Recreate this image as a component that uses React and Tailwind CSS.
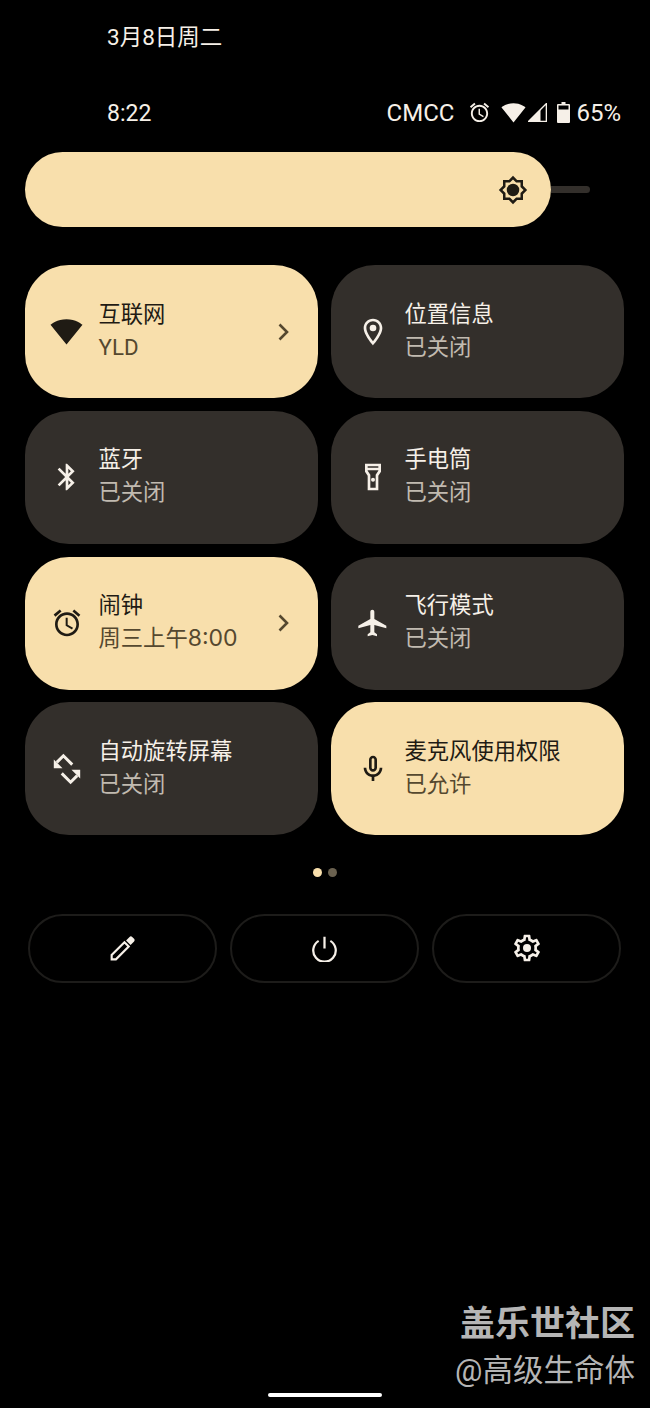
import React from 'react';

const FONT = "font-['Roboto','Noto_Sans_CJK_SC',sans-serif]";

// material style icon paths, 24x24 box
const ICONS = {
    wifi: <path d="M12.01 21.49L23.64 7c-.45-.34-4.93-4-11.64-4C5.28 3 .81 6.66.36 7l11.63 14.49.01.01.01-.01z" />,
    place: <><path d="M12 2C8.13 2 5 5.13 5 9c0 5.25 7 13 7 13s7-7.75 7-13c0-3.87-3.13-7-7-7zM7 9c0-2.76 2.24-5 5-5s5 2.24 5 5c0 2.88-2.88 7.19-5 9.88C9.92 16.21 7 11.85 7 9z" /><circle cx="12" cy="9" r="2.5" /></>,
    bluetooth: <path d="M17.71 7.71L12 2h-1v7.59L6.41 5 5 6.41 10.59 12 5 17.59 6.41 19 11 14.41V22h1l5.71-5.71-4.3-4.29 4.3-4.29zM13 5.83l1.88 1.88L13 9.59V5.83zm1.88 10.46L13 18.17v-3.76l1.88 1.88z" />,
    flashlight: <><path d="M18 2H6v6l2 3v11h8V11l2-3V2zm-2 2v1H8V4h8zm-2 6.4V20h-4v-9.6L8 7.4V7h8v.4l-2 3z" /><circle cx="12" cy="14" r="1.5" /></>,
    alarm: <path d="M22 5.72l-4.6-3.86-1.29 1.53 4.6 3.86L22 5.72zM7.88 3.39L6.6 1.86 2 5.71l1.29 1.53 4.59-3.85zM12.5 8H11v6l4.75 2.85.75-1.23-4-2.37V8zM12 4c-4.97 0-9 4.03-9 9s4.02 9 9 9c4.97 0 9-4.03 9-9s-4.03-9-9-9zm0 16c-3.87 0-7-3.13-7-7s3.13-7 7-7 7 3.13 7 7-3.13 7-7 7z" />,
    plane: <path d="M22 16v-2l-9-5V3.5c0-.83-.67-1.5-1.5-1.5S10 2.67 10 3.5V9l-9 5v2l9-2.5V19l-2 1.5V22l3.5-1 3.5 1v-1.5L13 19v-5.5l9 2.5z" />,
    rotate: <>
        <path d="M5.2 7.6L9.600 3.200L15.500 9.100M18.800 16.400L14.400 20.800L8.500 14.900" fill="none" stroke="currentColor" strokeWidth="2" />
        <path d="M3.200 11.500V5.600L9 11.500zM20.800 12.500V18.400L15 12.500z" />
    </>,
    mic: <><path d="M12 14c1.66 0 3-1.34 3-3V5c0-1.66-1.34-3-3-3S9 3.34 9 5v6c0 1.66 1.34 3 3 3zm-1-9c0-.55.45-1 1-1s1 .45 1 1v6c0 .55-.45 1-1 1s-1-.45-1-1V5z" /><path d="M17 11c0 2.76-2.24 5-5 5s-5-2.24-5-5H5c0 3.53 2.61 6.43 6 6.92V21h2v-3.08c3.39-.49 6-3.39 6-6.92h-2z" /></>,
    edit: <>
        <path d="M3.500 17.300V20.500H6.700L16.300 10.900L13.100 7.700z" fill="none" stroke="currentColor" strokeWidth="1.600" />
        <path d="M14.300 6.300L17.700 9.700L20.300 7.100C20.900 6.500 20.900 5.700 20.300 5.100L18.900 3.700C18.300 3.100 17.500 3.100 16.900 3.700z" />
    </>,
    power: <path d="M12 1.500V12M6.800 5.200A10 10 0 1 0 17.200 5.200" fill="none" stroke="currentColor" strokeWidth="2" />,
    gear: <><path d="M19.43 12.98c.04-.32.07-.64.07-.98 0-.34-.03-.66-.07-.98l2.11-1.65c.19-.15.24-.42.12-.64l-2-3.46c-.09-.16-.26-.25-.44-.25-.06 0-.12.01-.17.03l-2.49 1c-.52-.4-1.08-.73-1.69-.98l-.38-2.65C14.46 2.18 14.25 2 14 2h-4c-.25 0-.46.18-.49.42l-.38 2.65c-.61.25-1.17.59-1.69.98l-2.49-1c-.06-.02-.12-.03-.18-.03-.17 0-.34.09-.43.25l-2 3.46c-.13.22-.07.49.12.64l2.11 1.65c-.04.32-.07.65-.07.98 0 .33.03.66.07.98l-2.11 1.65c-.19.15-.24.42-.12.64l2 3.46c.09.16.26.25.44.25.06 0 .12-.01.17-.03l2.49-1c.52.4 1.08.73 1.69.98l.38 2.65c.03.24.24.42.49.42h4c.25 0 .46-.18.49-.42l.38-2.65c.61-.25 1.17-.59 1.69-.98l2.49 1c.06.02.12.03.18.03.17 0 .34-.09.43-.25l2-3.46c.12-.22.07-.49-.12-.64l-2.11-1.65zm-1.98-1.71c.04.31.05.52.05.73 0 .21-.02.43-.05.73l-.14 1.13.89.7 1.08.84-.7 1.21-1.27-.51-1.04-.42-.9.68c-.43.32-.84.56-1.25.73l-1.06.43-.16 1.13-.2 1.35h-1.4l-.19-1.35-.16-1.13-1.06-.43c-.43-.18-.83-.41-1.23-.71l-.91-.7-1.06.43-1.27.51-.7-1.21 1.08-.84.89-.7-.14-1.13c-.03-.31-.05-.54-.05-.74s.02-.43.05-.73l.14-1.13-.89-.7-1.08-.84.7-1.21 1.27.51 1.04.42.9-.68c.43-.32.84-.56 1.25-.73l1.06-.43.16-1.13.2-1.35h1.39l.19 1.35.16 1.13 1.06.43c.43.18.83.41 1.23.71l.91.7 1.06-.43 1.27-.51.7 1.21-1.07.85-.89.7.14 1.13z" /><circle cx="12" cy="12" r="3" /></>,
    brightness: <><path d="M20 8.69V4h-4.69L12 .69 8.69 4H4v4.69L.69 12 4 15.31V20h4.69L12 23.31 15.31 20H20v-4.69L23.31 12 20 8.69zm-2 5.79V18h-3.52L12 20.48 9.52 18H6v-3.52L3.52 12 6 9.52V6h3.52L12 3.52 14.48 6H18v3.52L20.48 12 18 14.48z" /><circle cx="12" cy="12" r="5" /></>,
};

const Icon = ({ name, className }) => (
    <svg viewBox="0 0 24 24" fill="currentColor" className={className}>{ICONS[name]}</svg>
);

const LATIN = "font-['Inter',sans-serif] text-[23px]";

const TILES = [
    { icon: 'wifi', title: '互联网', sub: 'YLD', on: true, more: true, iconSize: 'w-[33px] h-[33px]' },
    { icon: 'place', title: '位置信息', sub: '已关闭' },
    { icon: 'bluetooth', title: '蓝牙', sub: '已关闭' },
    { icon: 'flashlight', title: '手电筒', sub: '已关闭' },
    { icon: 'alarm', title: '闹钟', sub: <>周三上午<span className={LATIN}>8:00</span></>, on: true, more: true },
    { icon: 'plane', title: '飞行模式', sub: '已关闭' },
    { icon: 'rotate', title: '自动旋转屏幕', sub: '已关闭', iconSize: 'w-[36px] h-[36px] shrink-0' },
    { icon: 'mic', title: '麦克风使用权限', sub: '已允许', on: true },
];

const Tile = ({ tile }) => (
    <div className={`h-[133px] rounded-[44px] flex items-center pl-[25px] pr-[23px] ${tile.on ? 'bg-[#f8dfac] text-[#1f1b14]' : 'bg-[#332f2b] text-[#f6f0e8]'}`}>
        <div className="w-[33px] h-[33px] flex items-center justify-center shrink-0">
            <Icon name={tile.icon} className={tile.iconSize || 'w-8 h-8'} />
        </div>
        <div className="ml-[15.500px] pb-[2px] flex-1 min-w-0 text-[22.300px] leading-[33px]">
            <div>{tile.title}</div>
            <div className={tile.on ? 'text-[#55482f]' : 'text-[#c1bab0]'}>{tile.sub}</div>
        </div>
        {tile.more && (
            <svg viewBox="0 0 24 24" fill="none" stroke="currentColor" strokeWidth="2.600" className="w-6 h-6 text-[#55482f]">
                <path d="M8.500 4.500L16 12l-7.500 7.500" />
            </svg>
        )}
    </div>
);

const FooterButton = ({ icon, size }) => (
    <div className="w-[189px] h-[69px] rounded-full border-2 border-[#1d1c1a] flex items-center justify-center text-[#f6f0e8]">
        <Icon name={icon} className={size} />
    </div>
);

export default function App() {
    return (
        <div className={`relative w-[650px] h-[1408px] bg-black text-white overflow-hidden ${FONT}`}>
            <div className="pl-[107px] pt-[21px] text-[22.500px] leading-[33px] text-[#f6f0e8]">3月8日周二</div>

            <div className="mt-[42px] pl-[107px] pr-[29px] h-[33px] flex items-center text-[24px] text-[#f6f0e8]">
                <span className="text-[23px] pt-[3px]">8:22</span>
                <div className="ml-auto flex items-center">
                    <span>CMCC</span>
                    <Icon name="alarm" className="ml-[14px] w-[23px] h-[23px]" />
                    <Icon name="wifi" className="ml-[10px] w-[25px] h-[25px]" />
                    <svg viewBox="0 0 16 16" className="w-[19px] h-[19px] ml-[2px]">
                        <path d="M15.500.5V15.500H.5z" fill="none" stroke="#f6f0e8" strokeWidth="1.200" />
                        <path d="M10.500 5.500V15.500H.5z" fill="#f6f0e8" />
                    </svg>
                    <svg viewBox="0 0 13 21" className="ml-[10px] w-[13px] h-[21px]">
                        <path d="M4.500 0h4v2h3.500a1 1 0 011 1v17a1 1 0 01-1 1H1a1 1 0 01-1-1V3a1 1 0 011-1h3.500z" fill="#f6f0e8" />
                        <rect x="1.500" y="3.500" width="10" height="4" fill="#000" />
                    </svg>
                    <span className="ml-[6px]">65%</span>
                </div>
            </div>

            <div className="mt-[23px] ml-[25px] flex items-center">
                <div className="w-[526px] h-[75px] rounded-full bg-[#f8dfac] flex items-center justify-end pr-[23px] text-[#1f1b14]">
                    <Icon name="brightness" className="w-[30px] h-[30px]" />
                </div>
                <div className="w-[39px] h-[7px] rounded-r-full bg-[#332f2b]" />
            </div>

            <div className="mt-[38px] mx-[25px] w-[600px] grid grid-cols-2 gap-x-[13px] gap-y-[12.800px] pr-[1px]">
                {TILES.map((t) => <Tile key={t.title} tile={t} />)}
            </div>

            <div className="mt-[32.400px] flex justify-center gap-[6px]">
                <div className="w-[9px] h-[9px] rounded-full bg-[#f8dfac]" />
                <div className="w-[9px] h-[9px] rounded-full bg-[#6b6250]" />
            </div>

            <div className="mt-[37px] mx-[28px] flex gap-[13px]">
                <FooterButton icon="edit" size="w-[32px] h-[32px]" />
                <FooterButton icon="power" size="w-[27px] h-[27px]" />
                <FooterButton icon="gear" size="w-[32px] h-[32px]" />
            </div>

            {/* watermark + gesture bar sit on top of the page */}
            <div className="absolute right-[15px] top-[1305px] text-right text-[#b5b5b5]">
                <div className="text-[35px] leading-[40px] font-bold">盖乐世社区</div>
                <div className="mt-[7px] text-[30.500px] leading-[38px]">@高级生命体</div>
            </div>
            <div className="absolute left-[268px] top-[1393px] w-[114px] h-[4px] rounded-full bg-white" />
        </div>
    );
}
